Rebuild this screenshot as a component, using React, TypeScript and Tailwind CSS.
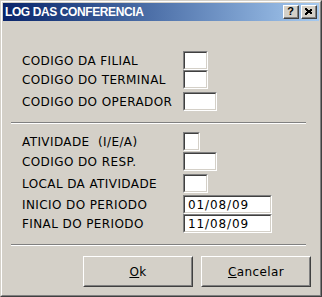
import React from "react";

const ui = { fontFamily: '"DejaVu Sans", Verdana, sans-serif' };
const arial = { fontFamily: '"Liberation Sans", Arial, sans-serif' };

function Sunken({ w, value }: { w: string; value?: string }) {
  return (
    <div className={`${w} h-[19px] border border-t-[#808080] border-l-[#808080] border-b-white border-r-white`}>
      <div className="h-full border border-t-[#404040] border-l-[#404040] border-b-[#d4d0c8] border-r-[#d4d0c8] bg-white flex items-center pl-[3px] text-[12px] tracking-[0.9px] text-black leading-none">
        {value}
      </div>
    </div>
  );
}

function Row({ label, w, value, mt }: { label: string; w: string; value?: string; mt: string }) {
  return (
    <div className={`flex items-center h-[19px] pl-[19px] ${mt}`}>
      <span className="w-[161px] text-[12px] tracking-[0.4px] text-black leading-none whitespace-pre">{label}</span>
      <Sunken w={w} value={value} />
    </div>
  );
}

function Separator({ mt }: { mt: string }) {
  return (
    <div className={`ml-[8px] mr-[13px] ${mt}`}>
      <div className="h-px bg-[#808080]" />
      <div className="h-px bg-white" />
    </div>
  );
}

function Button({ children }: { children: React.ReactNode }) {
  return (
    <div className="w-[110px] h-[31px] border border-t-white border-l-white border-b-[#404040] border-r-[#404040]">
      <div className="h-full border border-t-[#d4d0c8] border-l-[#d4d0c8] border-b-[#808080] border-r-[#808080] flex items-center justify-center text-[12px] tracking-[0.4px] text-black">
        {children}
      </div>
    </div>
  );
}

function CaptionButton({ children }: { children: React.ReactNode }) {
  return (
    <div className="w-[16px] h-[14px] bg-[#d4d0c8] border border-t-white border-l-white border-b-[#404040] border-r-[#404040]">
      <div className="h-full border-r border-b border-[#808080] flex items-center justify-center">
        {children}
      </div>
    </div>
  );
}

export default function App() {
  return (
    <div className="w-[322px] h-[297px] bg-[#d4d0c8] border border-t-[#d4d0c8] border-l-[#d4d0c8] border-b-[#404040] border-r-[#404040]" style={ui}>
      <div className="h-full border border-t-white border-l-white border-b-[#808080] border-r-[#808080] p-px flex flex-col">
        <div className="h-[18px] flex items-center pl-[2px] pr-[2px] bg-gradient-to-r from-[#0a246a] to-[#a6caf0]">
          <span className="flex-1 text-white font-bold text-[12px] tracking-[-0.4px]" style={arial}>
            LOG DAS CONFERENCIA
          </span>
          <div className="flex gap-[2px]">
            <CaptionButton>
              <span className="text-[11px] font-bold leading-none text-black" style={arial}>?</span>
            </CaptionButton>
            <CaptionButton>
              <svg width="8" height="7" viewBox="0 0 8 7">
                <path d="M0.5 0.5 L7.5 6.5 M1.5 0.5 L7.5 5.5 M0.5 1.5 L6.5 6.5 M7.5 0.5 L0.5 6.5 M6.5 0.5 L0.5 5.5 M7.5 1.5 L1.5 6.5" stroke="#000" strokeWidth="1" fill="none" shapeRendering="crispEdges" />
              </svg>
            </CaptionButton>
          </div>
        </div>

        <div className="flex-1 flex flex-col">
          <Row label="CODIGO DA FILIAL" w="w-[25px]" mt="mt-[30px]" />
          <Row label="CODIGO DO TERMINAL" w="w-[25px]" mt="mt-0" />
          <Row label="CODIGO DO OPERADOR" w="w-[34px]" mt="mt-[3px]" />

          <Separator mt="mt-[11px]" />

          <Row label="ATIVIDADE  (I/E/A)" w="w-[17px]" mt="mt-[8px]" />
          <Row label="CODIGO DO RESP." w="w-[34px]" mt="mt-px" />
          <Row label="LOCAL DA ATIVIDADE" w="w-[25px]" mt="mt-[3px]" />
          <Row label="INICIO DO PERIODO" w="w-[89px]" value="01/08/09" mt="mt-[2px]" />
          <Row label="FINAL DO PERIODO" w="w-[89px]" value="11/08/09" mt="mt-0" />

          <Separator mt="mt-[11px]" />

          <div className="flex justify-end gap-[8px] mr-[8px] mt-[10px]">
            <Button>
              <span><span className="underline">O</span>k</span>
            </Button>
            <Button>
              <span><span className="underline">C</span>ancelar</span>
            </Button>
          </div>
        </div>
      </div>
    </div>
  );
}
